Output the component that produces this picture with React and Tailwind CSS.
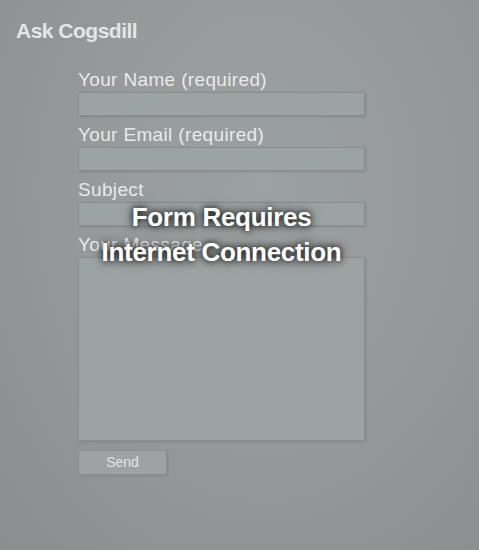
import React from 'react';

const fields = [
  { id: 'name', label: 'Your Name (required)' },
  { id: 'email', label: 'Your Email (required)' },
  { id: 'subject', label: 'Subject' },
];

export default function App() {
  return (
    <div
      className="relative w-[479px] h-[550px] overflow-hidden bg-[radial-gradient(ellipse_at_55%_35%,#9ca1a1_0%,#969a9a_45%,#8b8e8f_100%)]"
      style={{ fontFamily: '"Liberation Sans", Arial, sans-serif' }}
    >
      <h1 className="pl-4 pt-[19px] text-[21px] font-bold leading-[24px] tracking-[-0.5px] text-[#e4e6e6]">
        Ask Cogsdill
      </h1>

      {/* Form */}
      <form className="ml-[78px] mt-[26px] w-[287px] flex flex-col">
        {fields.map(f => (
          <div key={f.id} className="flex flex-col">
            <label className="text-[19px] leading-[22px] tracking-[0.35px] text-[#e8eaea]">{f.label}</label>
            <div className="mt-[1px] mb-[8px] h-[24px] bg-[#9ca3a3] border border-[#898e8e] shadow-[1px_1px_2px_rgba(0,0,0,0.12)]" />
          </div>
        ))}
        <label className="text-[19px] leading-[22px] tracking-[0.35px] text-[#e8eaea]">Your Message</label>
        <div className="mt-[1px] h-[184px] bg-[#9ca3a3] border border-[#898e8e] shadow-[1px_1px_2px_rgba(0,0,0,0.12)]" />
        <button
          type="button"
          className="mt-[9px] w-[89px] h-[25px] bg-[#9ea2a2] border border-[#8c9090] text-[14px] text-[#e2e4e4] shadow-[1px_1px_2px_rgba(0,0,0,0.1)]"
        >
          Send
        </button>
      </form>

      {/* Offline overlay */}
      <div className="absolute left-[78px] w-[287px] top-[200px] flex flex-col items-center text-white font-bold text-[26px] leading-[35px] tracking-[-0.3px] [text-shadow:0_0_6px_rgba(0,0,0,0.9),0_0_12px_rgba(0,0,0,0.6)]">
        <span>Form Requires</span>
        <span>Internet Connection</span>
      </div>
    </div>
  );
}
